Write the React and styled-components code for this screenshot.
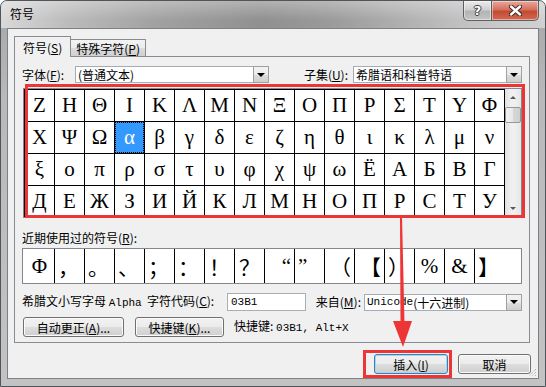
import React from "react";
import styled, { createGlobalStyle } from "styled-components";

const CJK = `"Noto Sans CJK SC", "Noto Sans", sans-serif`;
const MONO = `"Liberation Mono", "DejaVu Sans Mono", monospace`;
const SERIF = `"Liberation Serif", "DejaVu Serif", "Noto Sans CJK SC", serif`;

const GlobalStyle = createGlobalStyle`
  html, body { margin: 0; padding: 0; background: #ffffff; }
  body { font-family: ${CJK}; font-size: 12px; color: #000; }
  * { box-sizing: border-box; }
`;

//.........Window frame...............
const Window = styled.div`
  position: relative;
  width: 546px;
  height: 387px;
  border: 1px solid #50555b;
  border-radius: 7px 7px 0 0;
  overflow: hidden;
  display: flex;
  flex-direction: column;
  background: linear-gradient(to bottom, #a6a6a6 0%, #b9b9b9 25%, #c3c3c3 100%);
`;
const TitleBar = styled.div`
  height: 27px;
  flex: none;
  display: flex;
  align-items: flex-start;
  justify-content: space-between;
  padding: 0 6px 0 9px;
  background: linear-gradient(to bottom, rgba(255, 255, 255, 0.3), rgba(255, 255, 255, 0) 70%),
    linear-gradient(to right, #d9d9d9 0%, #bcbcbc 12%, #a2a2a2 28%, #909090 48%, #9a9a9a 60%, #b0b0b0 74%, #c6c6c6 88%, #d0d0d0 100%);
`;
const Title = styled.span`
  line-height: 26px;
  font-size: 12px;
`;
const Controls = styled.div`
  display: flex;
`;
const CtrlButton = styled.div`
  width: ${(p) => p.$w}px;
  height: 20px;
  display: flex;
  align-items: center;
  justify-content: center;
  border: 1px solid #5c5f63;
  border-top: none;
  border-radius: ${(p) => (p.$close ? "0 0 5px 0" : "0 0 0 5px")};
  border-left: ${(p) => (p.$close ? "none" : "1px solid #5c5f63")};
  background: ${(p) =>
    p.$close
      ? "linear-gradient(to bottom, #e9a99b 0%, #d4705c 45%, #c44a33 55%, #d26a4f 100%)"
      : "linear-gradient(to bottom, #ececec 0%, #cfcfcf 45%, #b4b4b4 55%, #c4c4c4 100%)"};
  box-shadow: inset 0 0 0 1px rgba(255, 255, 255, 0.45);
`;
const HelpGlyph = styled.span`
  font-family: "DejaVu Sans", sans-serif;
  font-weight: bold;
  font-size: 13px;
  color: #fff;
  text-shadow: 1px 0 0 #3a3a3a, -1px 0 0 #3a3a3a, 0 1px 0 #3a3a3a, 0 -1px 0 #3a3a3a;
`;
const Frame = styled.div`
  flex: 1;
  display: flex;
  padding: 0 6px 7px 6px;
`;
const Client = styled.div`
  position: relative;
  flex: 1;
  display: flex;
  flex-direction: column;
  border: 1px solid #7d8085;
  background: #f0f0f0;
`;

//.........Tabs...............
const Tabs = styled.div`
  display: flex;
  align-items: flex-end;
  margin: 7px 0 -1px 6px;
`;
const Tab = styled.div`
  position: relative;
  z-index: ${(p) => (p.$active ? 1 : 0)};
  height: ${(p) => (p.$active ? 21 : 18)}px;
  padding: 0 ${(p) => (p.$active ? 8 : 5)}px;
  margin-left: ${(p) => (p.$active ? 0 : -1)}px;
  display: flex;
  align-items: center;
  border: 1px solid #898c95;
  border-bottom: ${(p) => (p.$active ? "none" : "1px solid #898c95")};
  background: ${(p) =>
    p.$active ? "#f0f0f0" : "linear-gradient(to bottom, #f3f3f3 0%, #ebebeb 50%, #dddddd 51%, #cfcfcf 100%)"};
`;
const U = styled.span`
  text-decoration: underline;
`;
const Mono = styled.span`
  font-family: ${MONO};
  font-size: 11px;
`;
const Panel = styled.div`
  margin: 0 8px 0 6px;
  border: 1px solid #898c95;
  background: #f0f0f0;
  padding: 9px 7px 5px 7px;
  display: flex;
  flex-direction: column;
`;

//.........Fields...............
const Row = styled.div`
  display: flex;
  align-items: center;
  height: ${(p) => p.$h || 17}px;
  margin-top: ${(p) => p.$mt || 0}px;
`;
const Group = styled.div`
  display: flex;
  align-items: center;
  gap: ${(p) => p.$gap || 0}px;
  margin-left: ${(p) => (p.$right ? "auto" : "0")};
`;
const Label = styled.span`
  white-space: nowrap;
  line-height: 14px;
  width: ${(p) => (p.$w ? `${p.$w}px` : "auto")};
  margin-left: ${(p) => p.$ml || 0}px;
`;
const SelectBox = styled.div`
  width: ${(p) => p.$w}px;
  height: ${(p) => p.$h || 17}px;
  display: flex;
  border: 1px solid #a5acb5;
  background: #fff;
`;
const SelectText = styled.div`
  flex: 1;
  padding-left: 2px;
  display: flex;
  align-items: center;
  white-space: nowrap;
  overflow: hidden;
`;
const DropButton = styled.div`
  width: 16px;
  display: flex;
  align-items: center;
  justify-content: center;
  border: 1px solid #a0a0a0;
  margin: -1px -1px -1px 0;
  background: linear-gradient(to bottom, #f2f2f2 0%, #ebebeb 50%, #dddddd 51%, #cfcfcf 100%);
`;
const DownTri = styled.span`
  width: 0;
  height: 0;
  border-left: 4px solid transparent;
  border-right: 4px solid transparent;
  border-top: 4px solid #000;
`;
const TextInput = styled.div`
  width: ${(p) => p.$w}px;
  height: 18px;
  margin-left: 3px;
  padding-left: 3px;
  display: flex;
  align-items: center;
  border: 1px solid #abadb3;
  background: #fff;
`;

//.........Symbol grid...............
const GridWrap = styled.div`
  position: relative;
  margin: 5px 0 0 1px;
  width: 499px;
`;
const GridBox = styled.div`
  display: flex;
  height: 130px;
  border: 1px solid #828790;
  background: #fff;
`;
const Cells = styled.div`
  width: 481px;
  height: 128px;
  overflow: hidden;
  display: grid;
  grid-template-columns: repeat(16, 29px);
  grid-auto-rows: 31px;
  gap: 1px;
  padding: 1px 1px 0 1px;
  background: #000;
`;
const Cell = styled.div`
  display: flex;
  align-items: center;
  justify-content: center;
  font-family: ${SERIF};
  font-size: 21px;
  background: ${(p) => (p.$selected ? "#3399ff" : "#fff")};
  color: ${(p) => (p.$selected ? "#fff" : "#000")};
  outline: ${(p) => (p.$selected ? "1px dotted #000" : "none")};
  outline-offset: -1px;
`;
const Scrollbar = styled.div`
  width: 16px;
  display: flex;
  flex-direction: column;
  background: linear-gradient(to right, #e2e2e2, #f0f0f0 40%, #f0f0f0 60%, #e6e6e6);
`;
const ScrollArrow = styled.div`
  height: 17px;
  display: flex;
  align-items: center;
  justify-content: center;
`;
const ArrowTri = styled.span`
  width: 0;
  height: 0;
  border-left: 3px solid transparent;
  border-right: 3px solid transparent;
  border-${(p) => (p.$up ? "bottom" : "top")}: 3px solid #5a5a5a;
`;
const Thumb = styled.div`
  height: 16px;
  margin: 1px 0 0 0;
  border: 1px solid #979797;
  border-radius: 2px;
  background: linear-gradient(to right, #f3f3f3, #e7e7e7 50%, #d8d8d8 51%, #cfcfcf);
`;
const Spacer = styled.div`
  flex: 1;
`;
const RedFrame = styled.div`
  position: absolute;
  left: ${(p) => p.$l}px;
  top: ${(p) => p.$t}px;
  width: ${(p) => p.$w}px;
  height: ${(p) => p.$h}px;
  border: 3px solid #ee3535;
  pointer-events: none;
`;

//.........Recent symbols...............
const RecentBox = styled.div`
  margin-top: 3px;
  width: 500px;
  height: 36px;
  display: flex;
  padding-left: 2px;
  border: 1px solid #828790;
  background: #fff;
`;
const RecentCell = styled.div`
  width: 30px;
  display: flex;
  align-items: center;
  justify-content: ${(p) => p.$align || "center"};
  padding: 0 3px;
  font-family: ${SERIF};
  font-size: 21px;
  border-right: ${(p) => (p.$last ? "none" : "1px solid #000")};
`;

//.........Buttons...............
const Button = styled.div`
  width: ${(p) => p.$w}px;
  height: 20px;
  margin-left: ${(p) => p.$ml || 0}px;
  display: flex;
  align-items: center;
  justify-content: center;
  white-space: nowrap;
  border: 1px solid ${(p) => (p.$default ? "#3c7fb1" : "#707070")};
  border-radius: 3px;
  background: linear-gradient(to bottom, #f2f2f2 0%, #ebebeb 50%, #dddddd 51%, #cfcfcf 100%);
  box-shadow: inset 0 0 0 1px ${(p) => (p.$default ? "#9fd7f7" : "#fbfbfb")};
`;
const Footer = styled.div`
  display: flex;
  justify-content: flex-end;
  gap: 10px;
  margin: 11px 7px 0 0;
`;
const InsertWrap = styled.div`
  position: relative;
`;
const Grip = styled.svg`
  position: absolute;
  right: 1px;
  bottom: 1px;
`;
const ArrowSvg = styled.svg`
  position: absolute;
  left: 384px;
  top: 210px;
  pointer-events: none;
`;

const gridRows = [
  "ΖΗΘΙΚΛΜΝΞΟΠΡΣΤΥΦ",
  "ΧΨΩαβγδεζηθικλμν",
  "ξοπρστυφχψωЁАБВГ",
  "ДЕЖЗИЙКЛМНОПРСТУ",
];
const recent = [
  { ch: "Φ" },
  { ch: "，", align: "flex-start" },
  { ch: "。", align: "flex-start" },
  { ch: "、", align: "flex-start" },
  { ch: "；", align: "flex-start" },
  { ch: "：", align: "flex-start" },
  { ch: "！" },
  { ch: "？" },
  { ch: "“", align: "flex-end" },
  { ch: "”", align: "flex-start" },
  { ch: "（", align: "flex-end" },
  { ch: "【", align: "flex-end" },
  { ch: "）", align: "flex-start" },
  { ch: "%" },
  { ch: "&" },
  { ch: "】", align: "flex-start" },
];

const DropDown = ({ width, children }) => (
  <SelectBox $w={width}>
    <SelectText>{children}</SelectText>
    <DropButton>
      <DownTri />
    </DropButton>
  </SelectBox>
);

const App = () => {
  return (
    <>
      <GlobalStyle />
      <Window>
        <TitleBar>
          <Title>符号</Title>
          <Controls>
            <CtrlButton $w={29}>
              <HelpGlyph>?</HelpGlyph>
            </CtrlButton>
            <CtrlButton $w={47} $close>
              <svg width="13" height="11" viewBox="0 0 13 11">
                <path d="M2 1.5 L11 9.5 M11 1.5 L2 9.5" stroke="#3a2a26" strokeWidth="4.4" strokeLinecap="round" />
                <path d="M2 1.5 L11 9.5 M11 1.5 L2 9.5" stroke="#ffffff" strokeWidth="2.4" strokeLinecap="round" />
              </svg>
            </CtrlButton>
          </Controls>
        </TitleBar>

        <Frame>
          <Client>
            <Tabs>
              <Tab $active>
                符号(<U>S</U>)
              </Tab>
              <Tab>
                特殊字符(<U>P</U>)
              </Tab>
            </Tabs>

            <Panel>
              <Row>
                <Group>
                  <Label $w={53}>
                    字体(<U>F</U>):
                  </Label>
                  <DropDown width={194}>(普通文本)</DropDown>
                </Group>
                <Group $right $gap={5}>
                  <Label>
                    子集(<U>U</U>):
                  </Label>
                  <DropDown width={169}>希腊语和科普特语</DropDown>
                </Group>
              </Row>

              {/* ....Symbol grid with red highlight.............. */}
              <GridWrap>
                <GridBox>
                  <Cells>
                    {gridRows.map((row, r) =>
                      [...row].map((ch, c) => (
                        <Cell key={`${r}-${c}`} $selected={r === 1 && c === 3}>
                          {ch}
                        </Cell>
                      ))
                    )}
                  </Cells>
                  <Scrollbar>
                    <ScrollArrow>
                      <ArrowTri $up />
                    </ScrollArrow>
                    <Thumb />
                    <Spacer />
                    <ScrollArrow>
                      <ArrowTri />
                    </ScrollArrow>
                  </Scrollbar>
                </GridBox>
                <RedFrame $l={2} $t={-4} $w={500} $h={134} />
              </GridWrap>

              <Row $mt={13} $h={14}>
                <Label>
                  近期使用过的符号(<U>R</U>):
                </Label>
              </Row>
              <RecentBox>
                {recent.map((item, i) => (
                  <RecentCell key={i} $align={item.align} $last={i === recent.length - 1}>
                    {item.ch}
                  </RecentCell>
                ))}
              </RecentBox>

              <Row $mt={9} $h={18}>
                <Group>
                  <Label $w={202}>
                    希腊文小写字母 <Mono>Alpha</Mono>&nbsp; 字符代码(<U>C</U>):
                  </Label>
                  <TextInput $w={79}>
                    <Mono>03B1</Mono>
                  </TextInput>
                </Group>
                <Group $right $gap={3}>
                  <Label>
                    来自(<U>M</U>):
                  </Label>
                  <DropDown width={158}>
                    <Mono>Unicode</Mono>(十六进制)
                  </DropDown>
                </Group>
              </Row>

              <Row $mt={6} $h={20}>
                <Button $w={101} $ml={1}>
                  自动更正(<U>A</U>)...
                </Button>
                <Button $w={89} $ml={11}>
                  快捷键(<U>K</U>)...
                </Button>
                <Label $ml={10}>
                  快捷键: <Mono>03B1, Alt+X</Mono>
                </Label>
              </Row>
            </Panel>

            <Footer>
              <InsertWrap>
                <Button $w={74} $default>
                  插入(<U>I</U>)
                </Button>
                <RedFrame $l={-11} $t={-4} $w={89} $h={28} />
              </InsertWrap>
              <Button $w={73}>取消</Button>
            </Footer>

            <Grip width="10" height="10" viewBox="0 0 10 10">
              <path d="M9 2 L2 9 M9 5 L5 9 M9 8 L8 9" stroke="#a0a0a0" strokeWidth="1" strokeDasharray="1 1" />
            </Grip>
          </Client>
        </Frame>

        {/* ....Red annotation arrow.............. */}
        <ArrowSvg width="30" height="140" viewBox="0 0 30 140">
          <polygon points="15,5 17,5 19.5,112 15.5,112" fill="#ee3535" />
          <polygon points="8,110 27,110 18,136" fill="#ee3535" />
        </ArrowSvg>
      </Window>
    </>
  );
};

export default App;
